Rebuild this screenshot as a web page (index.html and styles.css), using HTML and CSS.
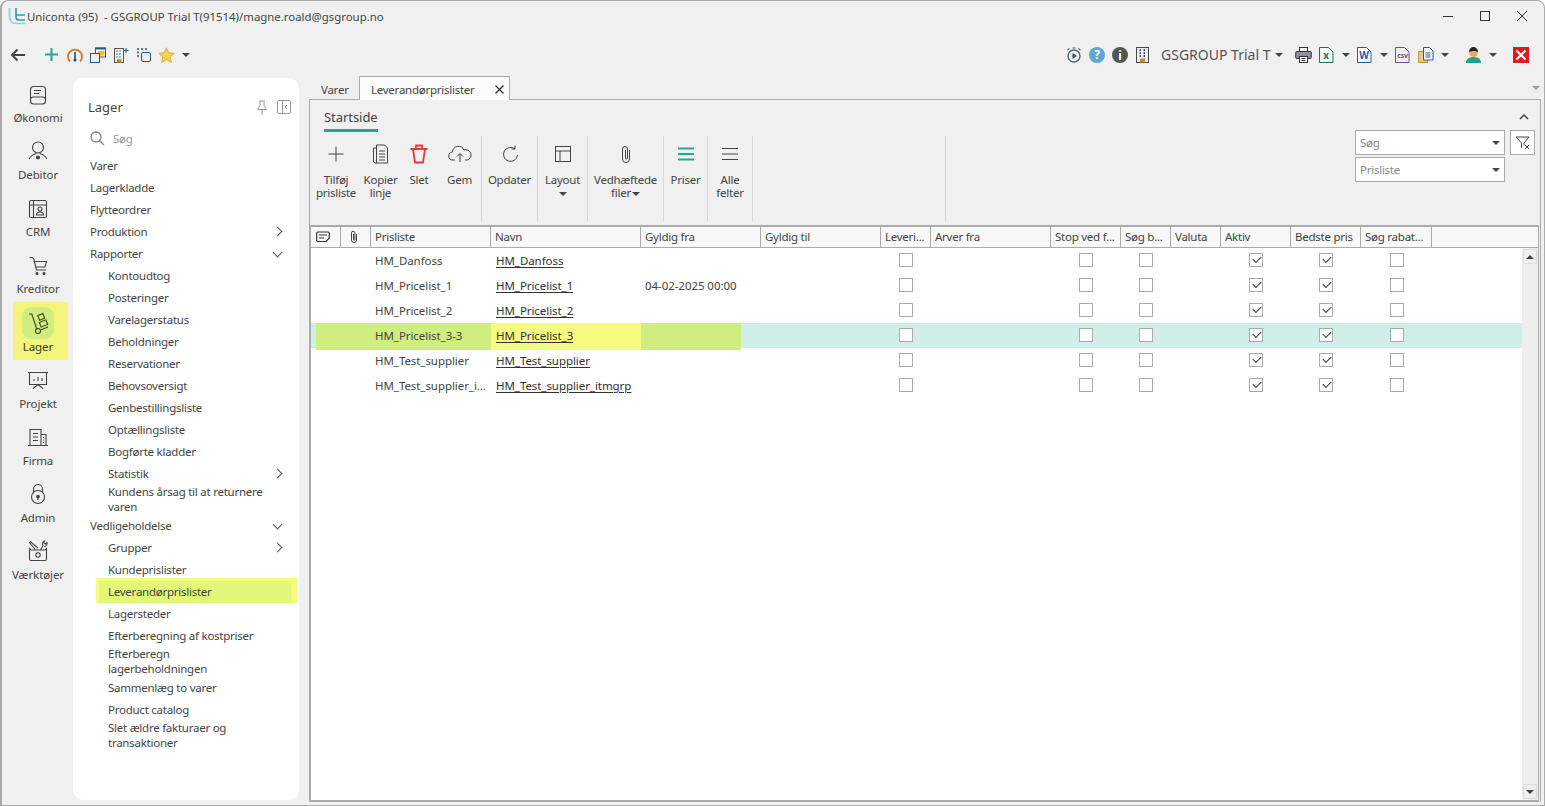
FILE: index.html
```html
<!DOCTYPE html>
<html lang="en">
<head>
    <meta charset="UTF-8">
    <title>Uniconta</title>
    <link rel="stylesheet" href="styles.css">
</head>
<body>
<div class="window">
    <div class="titlebar">
        <svg class="logo" width="18" height="18" viewBox="0 0 18 18" fill="none" stroke-width="1.700"><path d="M1.500 0v8c0 5 3 7.500 6.500 7.500h9.500" stroke="#86d6cd"/><path d="M8 0v9c0 2 1 3 3 3h6M8 7h9" stroke="#2f9fb0"/></svg>
        <span class="title">Uniconta (95)&nbsp; - GSGROUP Trial T(91514)/magne.roald@gsgroup.no</span>
        <div class="winbtns">
            <svg width="12" height="12" viewBox="0 0 12 12" stroke="#333" fill="none"><path d="M1 6.500h10"/></svg>
            <svg width="12" height="12" viewBox="0 0 12 12" stroke="#333" fill="none"><rect x="1.500" y="1.500" width="9" height="9"/></svg>
            <svg width="12" height="12" viewBox="0 0 12 12" stroke="#333" fill="none"><path d="M1 1l10 10M11 1L1 11"/></svg>
        </div>
    </div>

    <div class="toolbar">
        <div class="tool back"><svg width="16" height="14" viewBox="0 0 16 14" fill="none" stroke="#444" stroke-width="2"><path d="M15 7H2M7.500 1.500L2 7l5.500 5.500"/></svg></div>
        <div class="tool"><svg width="13" height="13" viewBox="0 0 13 13" stroke="#2aa58e" stroke-width="2"><path d="M6.500 0v13M0 6.500h13"/></svg></div>
        <div class="tool"><svg width="16" height="16" viewBox="0 0 16 16" fill="none"><path d="M3 14.500a7 7 0 1 1 10 0" stroke="#d4762c" stroke-width="1.800"/><path d="M8 5v7" stroke="#1f4e80" stroke-width="1.600"/><circle cx="8" cy="13" r="1.600" fill="#1f4e80"/></svg></div>
        <div class="tool"><svg width="16" height="16" viewBox="0 0 16 16" fill="none" stroke="#1f5a94"><rect x="5.500" y="1" width="10" height="9" fill="#fff"/><path d="M5.500 1.500h10" stroke-width="2"/><rect x="8" y="4" width="6.500" height="4.500" fill="#f5b914" stroke="none"/><rect x=".5" y="6.500" width="9" height="9" fill="#f0f0f0"/></svg></div>
        <div class="tool"><svg width="16" height="16" viewBox="0 0 16 16" fill="none"><rect x="1.500" y="1.500" width="9" height="14" stroke="#555"/><path d="M3.500 4h1M6.500 4h1M3.500 7h1M6.500 7h1M3.500 10h1M6.500 10h1" stroke="#1f5a94" stroke-width="1.500"/><rect x="4" y="12" width="4.500" height="3.500" fill="#c98a1e"/><path d="M13 1v5M10.500 3.500h5" stroke="#1f5a94"/></svg></div>
        <div class="tool"><svg width="16" height="16" viewBox="0 0 16 16" fill="none" stroke="#1f5a94"><rect x="5.500" y="5.500" width="9" height="9" rx="1.500"/><path d="M1 2h2M5 2h2M9 2h2M1 5.500h2M1 9h2" stroke-width="1.500"/></svg></div>
        <div class="tool"><svg width="17" height="16" viewBox="0 0 17 16"><path d="M8.500 .8l2.300 5 5.400.6-4 3.700 1.100 5.300-4.800-2.700-4.800 2.700 1.100-5.300-4-3.700 5.400-.6z" fill="#f7d154" stroke="#dfae3a"/></svg></div>
        <div class="tool small"><span class="caret"></span></div>

        <div class="toolbar-right">
            <div class="tool"><svg width="16" height="16" viewBox="0 0 16 16" fill="none" stroke="#4d6a6c"><circle cx="8" cy="9" r="6" stroke-width="1.400"/><path d="M6.500 6l4.500 3-4.500 3z" fill="#35505a" stroke="none"/><path d="M1.500 3l2-1.500M14.500 3l-2-1.500M6.500 1h3" stroke-width="1.200"/></svg></div>
            <div class="tool"><svg width="16" height="16" viewBox="0 0 16 16"><circle cx="8" cy="8" r="8" fill="#5ba8d2"/><text x="8" y="12" class="glyph-q">?</text></svg></div>
            <div class="tool"><svg width="16" height="16" viewBox="0 0 16 16"><circle cx="8" cy="8" r="8" fill="#555"/><text x="8" y="12.500" class="glyph-q">i</text></svg></div>
            <div class="tool"><svg width="14" height="16" viewBox="0 0 14 16" fill="none"><rect x=".5" y=".5" width="12" height="15" stroke="#445"/><path d="M3.500 3h1.500M7.500 3H9M3.500 6h1.500M7.500 6H9M3.500 9h1.500M7.500 9H9" stroke="#1f5a94" stroke-width="2"/><rect x="4" y="11.500" width="5" height="4" fill="#c98a1e"/></svg></div>
            <div class="company"><span>GSGROUP Trial T</span><span class="caret"></span></div>
            <div class="tool"><svg width="17" height="16" viewBox="0 0 17 16" fill="none" stroke="#333"><rect x="4.500" y=".5" width="8" height="4" /><rect x=".7" y="4.500" width="15.600" height="7" rx="1" fill="#8a9198"/><rect x="4.500" y="9.500" width="8" height="6" fill="#fff"/><path d="M6.500 11.500h4M6.500 13.500h4"/></svg></div>
            <div class="tool"><svg width="15" height="16" viewBox="0 0 15 16" fill="none"><path d="M.5.500h9l4.500 4.500v10.500H.5z" stroke="#217346" fill="#fff"/><text x="7" y="12" class="glyph-doc" fill="#217346">x</text></svg></div>
            <div class="tool small"><span class="caret"></span></div>
            <div class="tool"><svg width="15" height="16" viewBox="0 0 15 16" fill="none"><path d="M.5.500h9l4.500 4.500v10.500H.5z" stroke="#2b579a" fill="#fff"/><text x="7" y="12" class="glyph-doc" fill="#2b579a">W</text></svg></div>
            <div class="tool small"><span class="caret"></span></div>
            <div class="tool"><svg width="15" height="16" viewBox="0 0 15 16" fill="none"><path d="M.5.500h9l4.500 4.500v10.500H.5z" stroke="#7a4f86"/><text x="7.500" y="10.500" class="glyph-csv">csv</text></svg></div>
            <div class="tool"><svg width="16" height="16" viewBox="0 0 16 16" fill="none"><rect x=".7" y="4.500" width="9" height="11" fill="#f3c77c" stroke="#c98a2e"/><path d="M5.500.500h6l3.500 3.500v9H5.500z" fill="#fff" stroke="#2b579a"/><path d="M7.500 6h5M7.500 8h5M7.500 10h5" stroke="#2b579a"/></svg></div>
            <div class="tool small"><span class="caret"></span></div>
            <div class="spacer"></div>
            <div class="tool"><svg width="15" height="16" viewBox="0 0 15 16"><path d="M0 16c0-4 3-6 7.500-6s7.500 2 7.500 6z" fill="#24a08c"/><circle cx="7.500" cy="5.500" r="4.500" fill="#e8a868"/><path d="M3 5c0-3 2-5 4.500-5S12 2 12 5c-2-1.500-7-1.500-9 0z" fill="#222"/></svg></div>
            <div class="tool small"><span class="caret"></span></div>
            <div class="spacer last"></div>
            <div class="tool"><svg width="16" height="16" viewBox="0 0 16 16"><rect width="16" height="16" fill="#e2181f"/><path d="M3.500 3.500l9 9M12.500 3.500l-9 9" stroke="#fff" stroke-width="2.200"/></svg></div>
        </div>
    </div>

    <div class="main">
        <nav class="rail">
            <div class="rail-item">
                <svg width="24" height="24" viewBox="0 0 24 24"><rect x="4.500" y="3.500" width="15" height="17.500" rx="3"/><path d="M4.500 16.500a3 3 0 0 1 3-2.500h9a3 3 0 0 1 3 2.500M8 7.500h7M8 10.500h5"/></svg>
                <span>Økonomi</span>
            </div>
            <div class="rail-item">
                <svg width="24" height="24" viewBox="0 0 24 24"><circle cx="12" cy="7.500" r="5.500"/><path d="M3 19c2-3.500 5-5 7.500-5.500M21 19c-2-3.500-5-5-7.500-5.500"/><circle cx="12" cy="17.500" r="1.500" fill="#444"/></svg>
                <span>Debitor</span>
            </div>
            <div class="rail-item">
                <svg width="24" height="24" viewBox="0 0 24 24"><rect x="3.500" y="3.500" width="17" height="17" rx="1.500"/><path d="M3.500 8h17M7.500 3.500v17"/><circle cx="14" cy="12" r="2"/><path d="M10.500 18c0-4 7-4 7 0z"/></svg>
                <span>CRM</span>
            </div>
            <div class="rail-item">
                <svg width="24" height="24" viewBox="0 0 24 24"><path d="M3.500 3.500H6c1 0 1.500.5 2 2L10.500 16H20M7.500 7.500h13L19 13H9"/><circle cx="11" cy="19.500" r="1" fill="#444"/><circle cx="18" cy="19.500" r="1" fill="#444"/></svg>
                <span>Kreditor</span>
            </div>
            <div class="rail-item active">
                <span class="tile"></span>
                <svg width="24" height="24" viewBox="0 0 24 24"><path d="M3 3h2.800L11 18.500M14.500 19l7.500-3"/><circle cx="12" cy="20" r="2.500"/><rect x="12.500" y="3.500" width="5.500" height="5" transform="rotate(-22 15 6)"/><rect x="14" y="10" width="7" height="5" transform="rotate(-22 17.500 12.500)"/></svg>
                <span>Lager</span>
            </div>
            <div class="rail-item">
                <svg width="24" height="24" viewBox="0 0 24 24"><path d="M2 4.500h20M3.500 4.500v12h17v-12M7 20.500l5-4 5 4M8 13v-2M12 13V9M16 13v-3"/></svg>
                <span>Projekt</span>
            </div>
            <div class="rail-item">
                <svg width="24" height="24" viewBox="0 0 24 24"><path d="M4 20.500v-16h11v16M2 20.500h20M15 9.500h5v11M7 8.500h5M7 12h5M7 15.500h5M17 12.500h1M17 15h1M17 17.500h1"/></svg>
                <span>Firma</span>
            </div>
            <div class="rail-item">
                <svg width="24" height="24" viewBox="0 0 24 24"><circle cx="12" cy="15" r="6.500"/><path d="M7.500 10.500V7a4.500 4.500 0 0 1 9 0v3.500M12 15v3"/><circle cx="12" cy="14.500" r="1.300" fill="#444"/></svg>
                <span>Admin</span>
            </div>
            <div class="rail-item">
                <svg width="24" height="24" viewBox="0 0 24 24"><path d="M3.500 9.500L5 11h14l1.500-1.500V20a1.500 1.500 0 0 1-1.500 1.500H5A1.500 1.500 0 0 1 3.500 20zM9.500 11L5 5.500l-1.500-2 1-1 2 2L12 9M14.500 11l2.500-4.500c-1.500-1.500-.5-4 1.500-4.500l-.5 2 1.500 1 1.500-1.500c.5 2-1 4-3 3.800"/><circle cx="12" cy="16" r="2.200"/></svg>
                <span>Værktøjer</span>
            </div>
        </nav>

        <aside class="nav">
            <div class="nav-head">
                <span class="nav-title">Lager</span>
                <svg width="14" height="15" viewBox="0 0 14 15" fill="none" stroke="#999"><path d="M4 1h6M5 1v5L2.500 9.500h9L9 6V1M7 9.500V15"/></svg>
                <svg width="14" height="14" viewBox="0 0 14 14" fill="none" stroke="#999"><rect x=".5" y=".5" width="13" height="13" rx="1.500"/><path d="M5.500.5v13M10 5L8 7l2 2"/></svg>
            </div>
            <div class="nav-search">
                <svg width="15" height="15" viewBox="0 0 15 15" fill="none" stroke="#888" stroke-width="1.300"><circle cx="6" cy="6" r="5"/><path d="M9.700 9.700L14 14"/></svg>
                <span>Søg</span>
            </div>
            <ul class="nav-list">
                <li>Varer</li>
                <li>Lagerkladde</li>
                <li>Flytteordrer</li>
                <li class="more">Produktion</li>
                <li class="open">Rapporter</li>
                <li class="sub">Kontoudtog</li>
                <li class="sub">Posteringer</li>
                <li class="sub">Varelagerstatus</li>
                <li class="sub">Beholdninger</li>
                <li class="sub">Reservationer</li>
                <li class="sub">Behovsoversigt</li>
                <li class="sub">Genbestillingsliste</li>
                <li class="sub">Optællingsliste</li>
                <li class="sub">Bogførte kladder</li>
                <li class="sub more">Statistik</li>
                <li class="sub two">Kundens årsag til at returnere<br>varen</li>
                <li class="open">Vedligeholdelse</li>
                <li class="sub more">Grupper</li>
                <li class="sub">Kundeprislister</li>
                <li class="sub selected">Leverandørprislister</li>
                <li class="sub">Lagersteder</li>
                <li class="sub">Efterberegning af kostpriser</li>
                <li class="sub two">Efterberegn<br>lagerbeholdningen</li>
                <li class="sub">Sammenlæg to varer</li>
                <li class="sub">Product catalog</li>
                <li class="sub two">Slet ældre fakturaer og<br>transaktioner</li>
            </ul>
        </aside>

        <section class="workspace">
            <div class="tabs">
                <div class="tab">Varer</div>
                <div class="tab current">Leverandørprislister
                    <svg width="9" height="9" viewBox="0 0 9 9" stroke="#333" stroke-width="1.300"><path d="M.5.5l8 8M8.500.5l-8 8"/></svg>
                </div>
                <span class="tabs-menu"></span>
            </div>
            <div class="panel">
                <div class="ribbon-head">
                    <span class="ribbon-tab">Startside</span>
                    <svg width="10" height="6" viewBox="0 0 10 6" fill="none" stroke="#444" stroke-width="1.500"><path d="M1 5l4-4 4 4"/></svg>
                </div>
                <div class="ribbon">
                    <div class="group">
                        <div class="cmd w50">
                            <svg width="24" height="24" viewBox="0 0 24 24"><path d="M12 4.500v15M4.500 12h15"/></svg>
                            <span>Tilføj<br>prisliste</span>
                        </div>
                        <div class="cmd w39">
                            <svg width="24" height="24" viewBox="0 0 24 24"><path d="M7.500 4V3h8l3 3v15H7.500z"/><path d="M7.500 6H4.500v14l3 1.500M10 9h6M10 12h6M10 15h6M10 18h6"/></svg>
                            <span>Kopier<br>linje</span>
                        </div>
                        <div class="cmd w38">
                            <svg width="24" height="24" viewBox="0 0 24 24" class="red"><path d="M3.500 7h17M6 7l2 13.500h8L18 7M9 7V3.500h6V7"/></svg>
                            <span>Slet</span>
                        </div>
                        <div class="cmd w43">
                            <svg width="24" height="24" viewBox="0 0 24 24"><path d="M7 18H5a4 4 0 0 1-.5-8A6 6 0 0 1 16 8a5 5 0 0 1 3.500 10H17M12 20v-8M9 14.500l3-3 3 3"/></svg>
                            <span>Gem</span>
                        </div>
                    </div>
                    <div class="group">
                        <div class="cmd w55">
                            <svg width="24" height="24" viewBox="0 0 24 24"><path d="M17 7a7 7 0 1 0 2.500 6M17 3.500V7h-3.500"/></svg>
                            <span>Opdater</span>
                        </div>
                    </div>
                    <div class="group">
                        <div class="cmd w49">
                            <svg width="24" height="24" viewBox="0 0 24 24"><rect x="4.500" y="4.500" width="15" height="15"/><path d="M4.500 9h15M9 9v10.500"/></svg>
                            <span>Layout<br><span class="caret"></span></span>
                        </div>
                    </div>
                    <div class="group">
                        <div class="cmd w75">
                            <svg width="24" height="24" viewBox="0 0 24 24"><path d="M15.500 8v9a3.500 3.500 0 0 1-7 0V7a2.500 2.500 0 0 1 5 0v9a1 1 0 0 1-2 0V8"/></svg>
                            <span>Vedhæftede<br>filer<span class="caret"></span></span>
                        </div>
                    </div>
                    <div class="group">
                        <div class="cmd w43">
                            <svg width="24" height="24" viewBox="0 0 24 24" class="teal"><path d="M4 6.500h16M4 12h16M4 17.500h16"/></svg>
                            <span>Priser</span>
                        </div>
                    </div>
                    <div class="group">
                        <div class="cmd w44">
                            <svg width="24" height="24" viewBox="0 0 24 24"><path d="M4 6.500h16M4 12h16M4 17.500h16"/></svg>
                            <span>Alle<br>felter</span>
                        </div>
                    </div>
                    <div class="group blank"></div>
                    <div class="filters">
                        <div class="filter-col">
                            <div class="combo">Søg<span class="caret"></span></div>
                            <div class="combo">Prisliste<span class="caret"></span></div>
                        </div>
                        <div class="clear-filter">
                            <svg width="16" height="14" viewBox="0 0 16 14" fill="none" stroke="#444"><path d="M1 1h13L9 7v2.500M6.500 12V7L1 1M10 9l4 4M14 9l-4 4"/></svg>
                        </div>
                    </div>
                </div>

                <div class="grid">
                    <div class="cols head">
                        <div><svg width="14" height="12" viewBox="0 0 14 12" fill="none" stroke="#333" stroke-width="1.200"><path d="M2 1h10a1.300 1.300 0 0 1 1.300 1.300V7L10 10.500H2A1.300 1.300 0 0 1 .7 9.200V2.300A1.300 1.300 0 0 1 2 1zM3 4h8M3 7h5"/></svg></div>
                        <div><svg width="10" height="14" viewBox="0 0 10 14" fill="none" stroke="#444"><path d="M7.500 4v6a2.500 2.500 0 0 1-5 0V3a1.700 1.700 0 0 1 3.400 0v6.500a.7.700 0 0 1-1.400 0V4"/></svg></div>
                        <div>Prisliste</div>
                        <div>Navn</div>
                        <div>Gyldig fra</div>
                        <div>Gyldig til</div>
                        <div>Leveri...</div>
                        <div>Arver fra</div>
                        <div>Stop ved f...</div>
                        <div>Søg b...</div>
                        <div>Valuta</div>
                        <div>Aktiv</div>
                        <div>Bedste pris</div>
                        <div>Søg rabat...</div>
                        <div></div>
                    </div>
                    <div class="grid-body">
                        <div class="rows">
                            <div class="cols row">
                                <div></div><div></div>
                                <div>HM_Danfoss</div>
                                <div><a>HM_Danfoss</a></div>
                                <div></div><div></div>
                                <div class="mid"><i class="box"></i></div>
                                <div></div>
                                <div class="mid"><i class="box"></i></div>
                                <div class="mid"><i class="box"></i></div>
                                <div></div>
                                <div class="mid"><i class="box on"></i></div>
                                <div class="mid"><i class="box on"></i></div>
                                <div class="mid"><i class="box"></i></div>
                            </div>
                            <div class="cols row">
                                <div></div><div></div>
                                <div>HM_Pricelist_1</div>
                                <div><a>HM_Pricelist_1</a></div>
                                <div>04-02-2025 00:00</div><div></div>
                                <div class="mid"><i class="box"></i></div>
                                <div></div>
                                <div class="mid"><i class="box"></i></div>
                                <div class="mid"><i class="box"></i></div>
                                <div></div>
                                <div class="mid"><i class="box on"></i></div>
                                <div class="mid"><i class="box on"></i></div>
                                <div class="mid"><i class="box"></i></div>
                            </div>
                            <div class="cols row">
                                <div></div><div></div>
                                <div>HM_Pricelist_2</div>
                                <div><a>HM_Pricelist_2</a></div>
                                <div></div><div></div>
                                <div class="mid"><i class="box"></i></div>
                                <div></div>
                                <div class="mid"><i class="box"></i></div>
                                <div class="mid"><i class="box"></i></div>
                                <div></div>
                                <div class="mid"><i class="box on"></i></div>
                                <div class="mid"><i class="box on"></i></div>
                                <div class="mid"><i class="box"></i></div>
                            </div>
                            <div class="cols row focused">
                                <span class="mark mark-a"></span>
                                <span class="mark mark-b"></span>
                                <span class="mark mark-c"></span>
                                <div></div><div></div>
                                <div>HM_Pricelist_3-3</div>
                                <div><a>HM_Pricelist_3</a></div>
                                <div></div><div></div>
                                <div class="mid"><i class="box"></i></div>
                                <div></div>
                                <div class="mid"><i class="box"></i></div>
                                <div class="mid"><i class="box"></i></div>
                                <div></div>
                                <div class="mid"><i class="box on"></i></div>
                                <div class="mid"><i class="box on"></i></div>
                                <div class="mid"><i class="box"></i></div>
                            </div>
                            <div class="cols row">
                                <div></div><div></div>
                                <div>HM_Test_supplier</div>
                                <div><a>HM_Test_supplier</a></div>
                                <div></div><div></div>
                                <div class="mid"><i class="box"></i></div>
                                <div></div>
                                <div class="mid"><i class="box"></i></div>
                                <div class="mid"><i class="box"></i></div>
                                <div></div>
                                <div class="mid"><i class="box on"></i></div>
                                <div class="mid"><i class="box on"></i></div>
                                <div class="mid"><i class="box"></i></div>
                            </div>
                            <div class="cols row">
                                <div></div><div></div>
                                <div>HM_Test_supplier_i...</div>
                                <div><a>HM_Test_supplier_itmgrp</a></div>
                                <div></div><div></div>
                                <div class="mid"><i class="box"></i></div>
                                <div></div>
                                <div class="mid"><i class="box"></i></div>
                                <div class="mid"><i class="box"></i></div>
                                <div></div>
                                <div class="mid"><i class="box on"></i></div>
                                <div class="mid"><i class="box on"></i></div>
                                <div class="mid"><i class="box"></i></div>
                            </div>
                        </div>
                        <div class="scrollbar">
                            <div class="scroll-btn"><span class="caret up"></span></div>
                            <div class="scroll-btn"><span class="caret"></span></div>
                        </div>
                    </div>
                </div>
            </div>
        </section>
    </div>
</div>
</body>
</html>
```

FILE: styles.css
```css
* {
    box-sizing: border-box;
}

html, body {
    height: 100%;
}

body {
    margin: 0;
    overflow: hidden;
    font-family: "Noto Sans", "Open Sans", sans-serif;
    font-size: 11.5px;
    line-height: 15px;
    letter-spacing: -0.25px;
    color: #444;
    background: #fff;
}

svg {
    display: block;
    flex: none;
}

.window {
    height: 806px;
    display: flex;
    flex-direction: column;
    background: #f0f0f0;
    border: 1px solid #aaa;
    border-width: 1px 1px 1px 2px;
    border-radius: 8px 8px 0 0;
}

.caret {
    display: inline-block;
    width: 0;
    height: 0;
    border-left: 4px solid transparent;
    border-right: 4px solid transparent;
    border-top: 4px solid #444;
}

.caret.up {
    border-top: 0;
    border-bottom: 4px solid #444;
}

/* title bar */
.titlebar {
    height: 32px;
    flex: none;
    display: flex;
    align-items: center;
    padding: 0 0 1px 6px;
}

.logo {
    margin-right: 1px;
}

.title {
    color: #444;
    font-size: 11.4px;
    letter-spacing: 0;
}

.winbtns {
    margin-left: auto;
    display: flex;
    gap: 25px;
    padding: 0 16px 2px 0;
}

/* toolbar */
.toolbar {
    height: 43px;
    flex: none;
    display: flex;
    align-items: center;
    padding-right: 12px;
}

.toolbar-right {
    margin-left: auto;
    display: flex;
    align-items: center;
}

.tool {
    width: 23px;
    display: flex;
    justify-content: center;
    align-items: center;
}

.tool.back {
    width: 32px;
    margin-right: 6px;
}

.tool.small {
    width: 15px;
}

.spacer {
    width: 10px;
}

.spacer.last {
    width: 9px;
}

.company {
    width: 138px;
    padding-left: 7px;
    display: flex;
    align-items: center;
    gap: 5px;
    font-size: 14px;
    letter-spacing: 0;
    color: #555;
    white-space: nowrap;
}

.glyph-q {
    font-size: 12px;
    font-weight: 700;
    fill: #fff;
    text-anchor: middle;
}

.glyph-doc {
    font-size: 10px;
    font-weight: 700;
    text-anchor: middle;
}

.glyph-csv {
    font-size: 7px;
    font-weight: 700;
    fill: #7a4f86;
    text-anchor: middle;
}

/* main area */
.main {
    flex: 1;
    min-height: 0;
    display: flex;
}

.rail {
    width: 71px;
    flex: none;
    padding: 7px 0 0 1px;
}

.rail-item {
    position: relative;
    height: 57px;
    display: flex;
    flex-direction: column;
    align-items: center;
    letter-spacing: -0.1px;
}

.rail-item svg {
    fill: none;
    stroke: #444;
    stroke-width: 1.100;
    position: relative;
}

.rail-item span {
    position: relative;
    margin-top: 3px;
}

.rail-item:nth-child(n+5) span {
    margin-top: 4px;
}

.rail-item.active::before {
    content: "";
    position: absolute;
    left: 10px;
    top: -9px;
    width: 55px;
    height: 58px;
    background: #f3f47c;
}

.rail-item .tile,
.rail-item:nth-child(n+5) .tile {
    position: absolute;
    left: 19px;
    top: -4px;
    width: 32px;
    height: 32px;
    margin: 0;
    border-radius: 9px;
    background: #d0ed80;
}

.rail-item.active {
    color: #3a3f10;
}

.rail-item.active svg {
    stroke: #3d4a10;
}

/* side menu */
.nav {
    width: 226px;
    flex: none;
    margin: 2px 0 5px;
    background: #fff;
    border-radius: 10px;
}

.nav-head {
    height: 56px;
    display: flex;
    align-items: center;
    gap: 8px;
    padding: 2px 8px 0 15px;
}

.nav-title {
    font-size: 13px;
    letter-spacing: 0;
    margin-right: auto;
}

.nav-search {
    height: 22px;
    display: flex;
    align-items: center;
    gap: 8px;
    margin-top: -7px;
    padding-left: 17px;
    color: #999;
}

.nav-list {
    list-style: none;
    margin: 6px 0 0;
    padding: 0;
}

.nav-list li {
    position: relative;
    height: 22px;
    line-height: 22px;
    padding-left: 17px;
}

.nav-list li.sub {
    padding-left: 35px;
}

.nav-list li.two {
    height: 30px;
    line-height: 15px;
    margin: -1px 0 1px;
}

.nav-list li.more::after,
.nav-list li.open::after {
    content: "";
    position: absolute;
    width: 6px;
    height: 6px;
    border-top: 1px solid #555;
    border-right: 1px solid #555;
}

.nav-list li.more::after {
    right: 18px;
    top: 7px;
    transform: rotate(45deg);
}

.nav-list li.open::after {
    right: 18px;
    top: 6px;
    transform: rotate(135deg);
}

.nav-list li.selected {
    height: 25px;
    margin: -3px 2px 0 23px;
    padding-left: 9px;
    border: solid #f5fb7f;
    border-width: 3px 6px 0 3px;
    background: #e2f679;
}

/* tabs */
.workspace {
    flex: 1;
    min-width: 0;
    display: flex;
    flex-direction: column;
    margin: 0 3px 0 10px;
}

.tabs {
    height: 23px;
    flex: none;
    display: flex;
    position: relative;
    z-index: 1;
}

.tab {
    width: 50px;
    height: 23px;
    padding-left: 12px;
    line-height: 27px;
}

.tab.current {
    width: 151px;
    height: 24px;
    display: flex;
    align-items: center;
    justify-content: space-between;
    padding: 1px 5px 0 11px;
    line-height: 15px;
    background: #fbfbfb;
    border: 1px solid #aaa;
    border-bottom: 0;
}

.tabs-menu {
    margin: 10px 1px 0 auto;
    width: 0;
    height: 0;
    border-left: 4px solid transparent;
    border-right: 4px solid transparent;
    border-top: 4px solid #999;
}

.panel {
    flex: 1;
    min-height: 0;
    display: flex;
    flex-direction: column;
    border: 1px solid #aaa;
    border-bottom: 0;
    margin-bottom: 3px;
}

/* ribbon */
.ribbon-head {
    height: 36px;
    flex: none;
    display: flex;
    justify-content: space-between;
    padding: 8px 11px 0 14px;
}

.ribbon-head svg {
    margin-top: 6px;
}

.ribbon-tab {
    height: 24px;
    font-size: 13px;
    line-height: 19px;
    letter-spacing: -0.05px;
    border-bottom: 3px solid #2aa58e;
}

.ribbon {
    height: 85px;
    flex: none;
    display: flex;
    padding-left: 1px;
    padding-right: 5px;
}

.group {
    display: flex;
    height: 85px;
    border-right: 1px solid #d8d8d8;
}

.group.blank {
    width: 193px;
}

.cmd {
    display: flex;
    flex-direction: column;
    align-items: center;
    padding-top: 6px;
    text-align: center;
    line-height: 13px;
    white-space: nowrap;
}

.cmd svg {
    fill: none;
    stroke: #444;
    stroke-width: 1;
    margin-bottom: 7px;
}

.cmd svg.red {
    stroke: #e23b3b;
    stroke-width: 1.800;
}

.cmd svg.teal {
    stroke: #2aa58e;
    stroke-width: 2;
}

.cmd .caret {
    vertical-align: middle;
    margin-left: 1px;
}

.w38 { width: 38px; }
.w39 { width: 39px; }
.w43 { width: 43px; }
.w44 { width: 44px; }
.w49 { width: 49px; }
.w50 { width: 50px; }
.w55 { width: 55px; }
.w75 { width: 75px; }

.filters {
    margin-left: auto;
    margin-top: -6px;
    display: flex;
    gap: 5px;
}

.filter-col {
    display: flex;
    flex-direction: column;
    gap: 2px;
}

.combo {
    width: 150px;
    height: 25px;
    display: flex;
    align-items: center;
    justify-content: space-between;
    padding: 0 4px;
    background: #fff;
    border: 1px solid #aaa;
    color: #888;
}

.clear-filter {
    width: 25px;
    height: 25px;
    display: flex;
    align-items: center;
    justify-content: center;
    background: #fff;
    border: 1px solid #aaa;
}

/* data grid */
.grid {
    flex: 1;
    min-height: 0;
    display: flex;
    flex-direction: column;
    margin: 4px 1px 0 0;
    background: #fff;
    border: 1px solid #aaa;
    border-top-width: 2px;
    border-bottom-width: 2px;
}

.cols {
    display: grid;
    grid-template-columns: 30px 30px 120px 150px 120px 120px 50px 120px 70px 50px 50px 70px 70px 71px 1fr;
}

.head {
    height: 21px;
    flex: none;
    background: #f8f8f8;
    border-bottom: 1px solid #aaa;
}

.head > div {
    display: flex;
    align-items: center;
    padding: 0 0 2px 4px;
    border-right: 1px solid #aaa;
    white-space: nowrap;
    overflow: hidden;
}

.head > div:nth-child(1) {
    justify-content: center;
    padding: 0 6px 0 0;
}

.head > div:nth-child(2) {
    justify-content: center;
    padding: 0 4px 0 0;
}

.head > div:last-child {
    border-right: 0;
}

.grid-body {
    flex: 1;
    min-height: 0;
    display: flex;
}

.rows {
    flex: 1;
    min-width: 0;
}

.row {
    position: relative;
    height: 25px;
    letter-spacing: -0.06px;
}

.row > div {
    position: relative;
    z-index: 1;
    display: flex;
    align-items: center;
    padding-left: 4px;
    white-space: nowrap;
}

.row > .mid {
    justify-content: center;
    padding-left: 0;
}

.row a {
    margin-left: 1px;
    color: #333;
    text-decoration: underline;
    text-underline-offset: 2px;
}

.row.focused {
    background: #d0eee9;
}

.mark {
    position: absolute;
    top: 0;
    height: 27px;
    background: #d0ed80;
}

.mark-a {
    left: 5px;
    width: 175px;
}

.mark-b {
    left: 180px;
    width: 150px;
    background: #f4fb7e;
}

.mark-c {
    left: 330px;
    width: 100px;
}

.box {
    position: relative;
    width: 14px;
    height: 14px;
    margin-top: -2px;
    background: #fff;
    border: 1px solid #aaa;
}

.box.on::after {
    content: "";
    position: absolute;
    left: 3px;
    top: 2px;
    width: 7px;
    height: 4px;
    border-left: 1px solid #333;
    border-bottom: 1px solid #333;
    transform: rotate(-45deg);
}

.scrollbar {
    width: 16px;
    flex: none;
    display: flex;
    flex-direction: column;
    justify-content: space-between;
    padding: 1px;
    background: #eee;
}

.scroll-btn {
    height: 15px;
    display: flex;
    align-items: center;
    justify-content: center;
    border: 1px solid #ddd;
}
```
